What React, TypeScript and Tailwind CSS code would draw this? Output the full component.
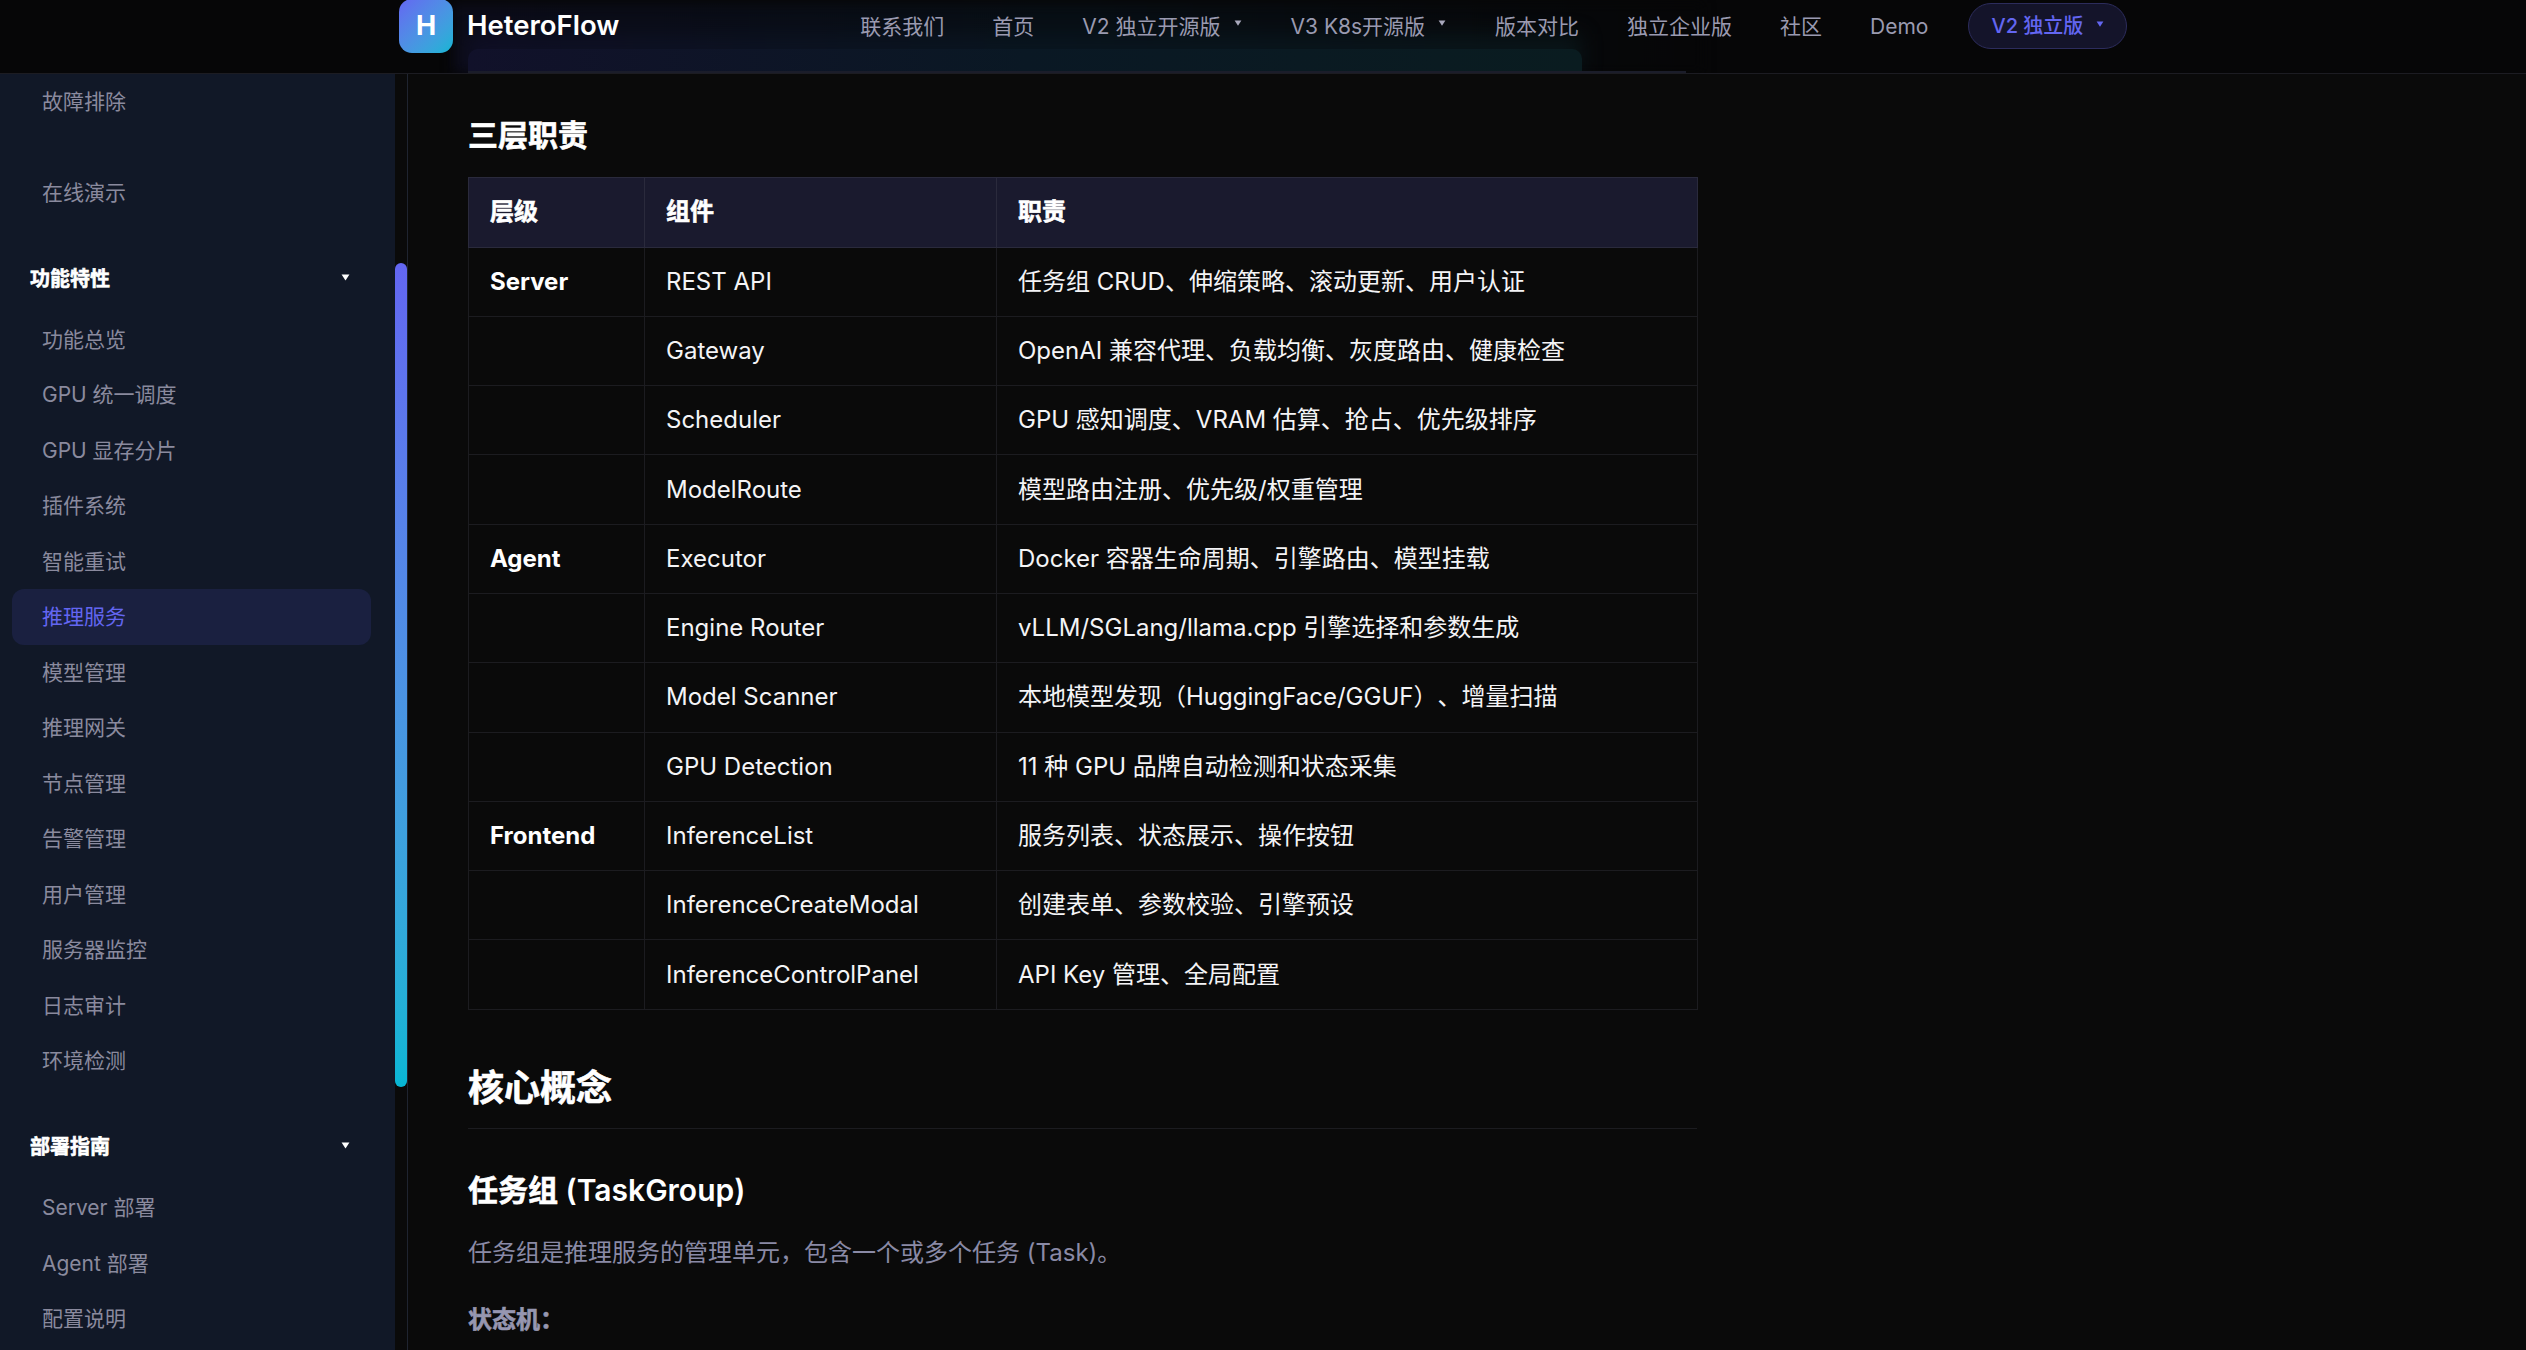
const font = 'font-["Inter","Noto_Sans_CJK_SC",sans-serif]'
const heavy = '[-webkit-text-stroke:0.6px_currentColor]'

const featureItems = ['功能总览', 'GPU 统一调度', 'GPU 显存分片', '插件系统', '智能重试', '推理服务', '模型管理', '推理网关', '节点管理', '告警管理', '用户管理', '服务器监控', '日志审计', '环境检测']
const deployItems = ['Server 部署', 'Agent 部署', '配置说明']

const rows = [
  ['Server', 'REST API', '任务组 CRUD、伸缩策略、滚动更新、用户认证'],
  ['', 'Gateway', 'OpenAI 兼容代理、负载均衡、灰度路由、健康检查'],
  ['', 'Scheduler', 'GPU 感知调度、VRAM 估算、抢占、优先级排序'],
  ['', 'ModelRoute', '模型路由注册、优先级/权重管理'],
  ['Agent', 'Executor', 'Docker 容器生命周期、引擎路由、模型挂载'],
  ['', 'Engine Router', 'vLLM/SGLang/llama.cpp 引擎选择和参数生成'],
  ['', 'Model Scanner', '本地模型发现（HuggingFace/GGUF）、增量扫描'],
  ['', 'GPU Detection', '11 种 GPU 品牌自动检测和状态采集'],
  ['Frontend', 'InferenceList', '服务列表、状态展示、操作按钮'],
  ['', 'InferenceCreateModal', '创建表单、参数校验、引擎预设'],
  ['', 'InferenceControlPanel', 'API Key 管理、全局配置'],
]

function Caret({ className }: { className: string }) {
  return (
    <svg viewBox="0 0 10 8" className={className} fill="currentColor">
      <path d="M0.5 0.5h9L5 7.5z" />
    </svg>
  )
}

function NavLink({ label, caret }: { label: string; caret?: boolean }) {
  return (
    <a className="flex items-center text-[21px] leading-none text-[#9a9ab0] whitespace-nowrap">
      {label}
      {caret && <Caret className="w-[8px] h-[6px] ml-[13px] mr-[1px] -mt-[6px] text-[#a8a8bc]" />}
    </a>
  )
}

function SideItem({ label, active, className = '' }: { label: string; active?: boolean; className?: string }) {
  return (
    <a className={`mx-[12px] flex h-[55.5px] w-[359px] items-center rounded-[12px] px-[30px] text-[21px] ${active ? 'bg-[#1a2040] text-[#6366f1]' : 'text-[#8a8a9e]'} ${className}`}>
      {label}
    </a>
  )
}

function SideGroup({ label, className }: { label: string; className: string }) {
  return (
    <div className={`flex h-[36px] items-center justify-between pl-[30px] pr-[45px] text-[20px] font-bold text-white ${heavy} ${className}`}>
      {label}
      <Caret className="w-[9px] h-[7px] -mt-[3px] text-white" />
    </div>
  )
}

export default function App() {
  return (
    <div className={`flex h-screen flex-col overflow-hidden bg-[#0a0a0a] [text-spacing-trim:space-all] ${font}`}>
      <header className="relative z-10 flex h-[74px] shrink-0 items-center overflow-hidden border-b border-[#1c1c22] bg-[#060607] pb-[21px] pl-[399px]">
        {/* blurred page content showing through the header */}
        <div className="absolute left-[453px] top-[3px] h-[70px] w-[1250px] bg-gradient-to-r from-[#0b0b18] via-[#070e14] to-[#060607] blur-[6px]" />
        <div className="absolute left-[468px] top-[34px] h-[39px] w-[1114px] bg-gradient-to-r from-[#10102a] via-[#0a1824] to-[#0a1a1e] opacity-70 blur-[10px]" />
        <div className="absolute bottom-0 left-[468px] h-[24px] w-[1114px] rounded-t-[10px] bg-gradient-to-r from-[#11112a] via-[#0a1824] to-[#0a1c20]" />
        <div className="absolute bottom-0 left-[468px] h-[2px] w-[1218px] bg-[#1b1d2a]" />

        <div className="relative flex h-[54px] w-[54px] shrink-0 items-center justify-center rounded-[13px] bg-gradient-to-br from-[#6366f1] to-[#06b6d4] text-[27px] font-bold text-white">
          H
        </div>
        <span className="relative ml-[14px] text-[27.5px] font-semibold text-white">HeteroFlow</span>
        <nav className="relative ml-[241px] flex items-center gap-[48px]">
          <NavLink label="联系我们" />
          <NavLink label="首页" />
          <NavLink label="V2 独立开源版" caret />
          <NavLink label="V3 K8s开源版" caret />
          <NavLink label="版本对比" />
          <NavLink label="独立企业版" />
          <NavLink label="社区" />
          <NavLink label="Demo" />
          <button className="-ml-[8px] flex h-[46px] w-[159px] items-center rounded-full border border-[#2c2c5c] bg-[#14142a] pl-[22px] text-[20px] font-medium text-[#6366f1]">
            V2 独立版
            <Caret className="w-[8px] h-[6px] ml-[13px] -mt-[4px] text-[#6366f1]" />
          </button>
        </nav>
      </header>

      <div className="flex min-h-0 flex-1">
        <aside className="w-[395px] shrink-0 overflow-hidden bg-[#111827]">
          <SideItem label="故障排除" />
          <SideItem label="在线演示" className="mt-[35px]" />
          <SideGroup label="功能特性" className="mt-[41px] mb-[14.5px]" />
          {featureItems.map(item => (
            <SideItem key={item} label={item} active={item === '推理服务'} />
          ))}
          <SideGroup label="部署指南" className="mt-[40px] mb-[15.5px]" />
          {deployItems.map(item => (
            <SideItem key={item} label={item} />
          ))}
        </aside>

        <div className="w-[13px] shrink-0 border-r border-[#1f2430] bg-[#0a0a0a] pt-[189px]">
          <div className="h-[824px] w-[12px] rounded-full bg-gradient-to-b from-[#6366f1] to-[#06b6d4]" />
        </div>

        <main className="min-w-0 flex-1 pl-[60px] pt-[39px]">
          <div className="w-[1229px]">
            <h3 className={`h-[44px] text-[30px] font-bold leading-[44px] text-white ${heavy}`}>三层职责</h3>
            <table className="mt-[20px] w-[1229px] table-fixed border-collapse text-[24px] text-[#f4f4f6]">
              <colgroup>
                <col className="w-[176px]" />
                <col className="w-[352px]" />
                <col className="w-[701px]" />
              </colgroup>
              <thead>
                <tr className={`h-[69.5px] bg-[#1a1a2e] text-left font-bold text-white ${heavy}`}>
                  <th className="border border-[#2a2a3c] px-[21px]">层级</th>
                  <th className="border border-[#2a2a3c] px-[21px]">组件</th>
                  <th className="border border-[#2a2a3c] px-[21px]">职责</th>
                </tr>
              </thead>
              <tbody>
                {rows.map(([tier, component, duty]) => (
                  <tr key={component} className="h-[69.3px]">
                    <td className="border border-[#1c1c20] px-[21px] font-bold text-white">{tier}</td>
                    <td className="border border-[#1c1c20] px-[21px]">{component}</td>
                    <td className="border border-[#1c1c20] px-[21px]">{duty}</td>
                  </tr>
                ))}
              </tbody>
            </table>

            <h2 className={`mt-[53px] h-[66px] border-b border-[#1c1c20] text-[36px] font-bold leading-[50px] text-white ${heavy}`}>核心概念</h2>
            <h3 className="mt-[39px] h-[44px] text-[30px] font-semibold leading-[44px] text-white">
              <span className={`font-bold ${heavy}`}>任务组</span> (TaskGroup)
            </h3>
            <p className="mt-[22px] h-[38px] text-[24px] leading-[38px] text-[#8a8aa6]">任务组是推理服务的管理单元，包含一个或多个任务 (Task)。</p>
            <p className={`mt-[29px] h-[38px] text-[24px] font-bold leading-[38px] text-[#9696b0] ${heavy}`}>状态机：</p>
          </div>
        </main>
      </div>
    </div>
  )
}
